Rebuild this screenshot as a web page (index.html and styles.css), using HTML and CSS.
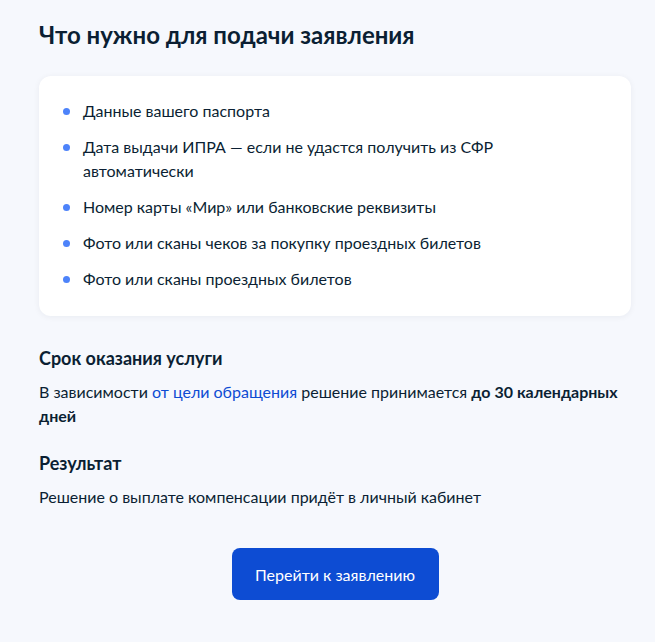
FILE: index.html
```html
<!DOCTYPE html>
<html lang="ru">
<head>
  <meta charset="UTF-8" />
  <meta name="viewport" content="width=device-width, initial-scale=1.0" />
  <title>Что нужно для подачи заявления</title>
  <link rel="stylesheet" href="styles.css">
</head>
<body>
  <div class="page">
    <h2 class="title">Что нужно для подачи заявления</h2>

    <div class="card">
      <ul class="docs">
        <li>Данные вашего паспорта</li>
        <li>Дата выдачи ИПРА — если не удастся получить из СФР автоматически</li>
        <li>Номер карты «Мир» или банковские реквизиты</li>
        <li>Фото или сканы чеков за покупку проездных билетов</li>
        <li>Фото или сканы проездных билетов</li>
      </ul>
    </div>

    <div class="section">
      <h3>Срок оказания услуги</h3>
      <p>В зависимости <a href="#">от цели обращения</a> решение принимается <b>до 30 календарных дней</b></p>
    </div>

    <div class="section">
      <h3>Результат</h3>
      <p>Решение о выплате компенсации придёт в личный кабинет</p>
    </div>

    <div class="actions">
      <button class="btn">Перейти к заявлению</button>
    </div>
  </div>
</body>
</html>
```

FILE: styles.css
```css
body {
  margin: 0;
  background-color: #f6f8fd;
  color: #0b1f33;
  font-family: 'Lato', 'Noto Sans', sans-serif;
  font-size: 16px;
  line-height: 24px;
}
.page {
  width: 592px;
  margin-left: 39px;
  padding-top: 19px;
}
.title {
  margin: 0 0 25px;
  font-size: 24px;
  line-height: 32px;
  font-weight: 700;
}
.card {
  background: #fff;
  border-radius: 12px;
  box-shadow: 0 1px 6px rgba(11, 31, 51, 0.06);
  padding: 23px 24px 25px;
}
.docs {
  list-style: none;
  margin: 0;
  padding: 0;
  display: flex;
  flex-direction: column;
  gap: 12px;
}
.docs li {
  position: relative;
  padding-left: 20px;
  padding-right: 110px;
}
.docs li::before {
  content: '';
  position: absolute;
  left: 0;
  top: 9px;
  width: 7px;
  height: 7px;
  border-radius: 50%;
  background: #4d83fa;
}
.section {
  margin-top: 30px;
}
.section + .section {
  margin-top: 23px;
}
.section h3 {
  margin: 0 0 10px;
  font-size: 18px;
  line-height: 24px;
  font-weight: 700;
}
.section p {
  margin: 0;
}
.section a {
  color: #0d4cd3;
  text-decoration: none;
}
.section b {
  font-weight: 700;
}
.actions {
  display: flex;
  justify-content: center;
  margin-top: 39px;
}
.btn {
  background: #0d4cd3;
  color: #fff;
  border: none;
  border-radius: 8px;
  width: 207px;
  height: 52px;
  font-family: 'Lato', 'Noto Sans', sans-serif;
  font-size: 16px;
  cursor: pointer;
}
```
